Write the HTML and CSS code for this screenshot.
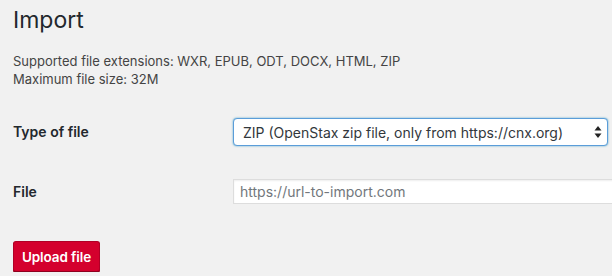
FILE: index.html
```html
<!DOCTYPE html>
<html>
<head>
<meta charset="utf-8">
<title>Import</title>
<link rel="stylesheet" href="styles.css">
</head>
<body>
<div class="wrap">
  <h1 class="title">Import</h1>
  <p class="info">Supported file extensions: WXR, EPUB, ODT, DOCX, HTML, ZIP<br>Maximum file size: 32M</p>
  <form class="form">
    <div class="row row-type">
      <label class="label label-type" for="type">Type of file</label>
      <div class="control select-wrap">
        <select id="type" class="select">
          <option>ZIP (OpenStax zip file, only from https://cnx.org)</option>
        </select>
        <svg class="arrows" width="8" height="14" viewBox="0 0 8 14" aria-hidden="true">
          <path d="M4 1 L7.5 5.5 L0.5 5.5 Z" fill="#222"/>
          <path d="M4 13 L7.5 8.5 L0.5 8.5 Z" fill="#222"/>
        </svg>
      </div>
    </div>
    <div class="row row-file">
      <label class="label label-file" for="url">File</label>
      <div class="control">
        <input id="url" class="input" type="text" placeholder="https://url-to-import.com">
      </div>
    </div>
    <button type="button" class="button">Upload file</button>
  </form>
</div>
</body>
</html>
```
FILE: styles.css
```css
html, body {
  margin: 0;
  padding: 0;
  background: #f1f1f1;
  overflow: hidden;
}
body {
  font-family: Inter, "Liberation Sans", sans-serif;
  color: #23282d;
}
.wrap {
  padding: 0 0 0 13px;
}
.title {
  margin: 5px 0 0;
  font-size: 23px;
  line-height: 30px;
  font-weight: 400;
  color: #23282d;
}
.info {
  margin: 17px 0 0;
  font-size: 13px;
  line-height: 18px;
  color: #444;
}
.form {
  margin: 15px 0 0;
}
.row {
  display: grid;
  grid-template-columns: 220px 400px;
}
.row-type {
  padding: 15px 0 15px;
}
.row-file {
  padding: 18px 0 15px;
}
.label {
  font-size: 14px;
  line-height: 20px;
  font-weight: 600;
  color: #23282d;
}
.label-type {
  padding-top: 4px;
}
.label-file {
  padding-top: 3px;
}
.select-wrap {
  position: relative;
  width: 375px;
}
.select {
  appearance: none;
  -webkit-appearance: none;
  display: block;
  box-sizing: border-box;
  width: 375px;
  height: 28px;
  margin: 0;
  padding: 0 24px 0 9px;
  font-family: Inter, "Liberation Sans", sans-serif;
  font-size: 14px;
  color: #32373c;
  background: #fff;
  border: 1px solid #5b9dd9;
  border-radius: 4px;
  box-shadow: 0 0 2px rgba(30, 140, 190, 0.8);
  outline: none;
}
.arrows {
  position: absolute;
  right: 6px;
  top: 7px;
}
.input {
  display: block;
  box-sizing: border-box;
  width: 400px;
  height: 25px;
  margin: 0;
  padding: 0 6px;
  font-family: Inter, "Liberation Sans", sans-serif;
  font-size: 14px;
  color: #32373c;
  background: #fff;
  border: 1px solid #ddd;
  border-radius: 0;
  box-shadow: inset 0 1px 2px rgba(0, 0, 0, 0.07);
  outline: none;
}
.input::placeholder {
  color: #72777c;
}
.button {
  display: block;
  box-sizing: border-box;
  margin: 22px 0 0;
  width: 87px;
  height: 31px;
  padding: 0;
  text-align: center;
  font-family: Inter, "Liberation Sans", sans-serif;
  font-size: 13.5px;
  font-weight: 600;
  letter-spacing: -0.1px;
  color: #fff;
  background: #d4002d;
  border: 1px solid #b00026;
  border-bottom-color: #8e001f;
  border-radius: 3px;
  box-shadow: 0 1px 0 #8e001f;
  cursor: pointer;
}
```
